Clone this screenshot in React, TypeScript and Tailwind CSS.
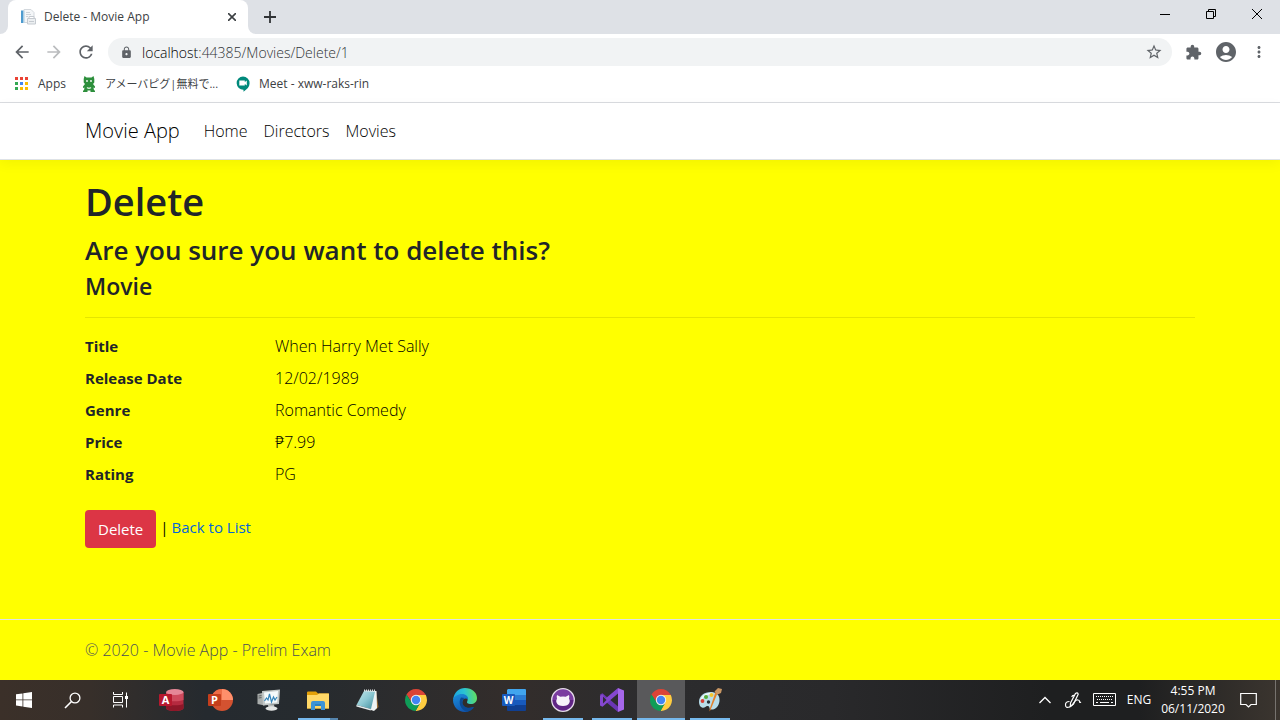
import type { ReactNode } from "react";
import {
  MdAccountCircle,
  MdArrowBack,
  MdArrowForward,
  MdExtension,
  MdLock,
  MdMoreVert,
  MdRefresh,
  MdStarBorder,
} from "react-icons/md";

const details = [
  { label: "Title", value: "When Harry Met Sally" },
  { label: "Release Date", value: "12/02/1989" },
  { label: "Genre", value: "Romantic Comedy" },
  { label: "Price", value: "₱7.99" },
  { label: "Rating", value: "PG" },
];

function PageIcon() {
  return (
    <svg width="16" height="16" viewBox="0 0 16 16" aria-hidden="true">
      <path d="M4 .5h7l3 3v10H4z" fill="#f4f6f8" stroke="#d3d8dd" />
      <path d="M1 1.500h2.500v12.500H1z" fill="#4d9bcf" />
      <path d="M4 2v12" stroke="#bcd9ea" />
      <path d="M6 3.500h4M6 5.500h5M6 7.500h2" stroke="#ccd2d8" />
      <path d="M7.500 9.500h8v5.500h-8z" fill="#eceff1" stroke="#c5cad0" />
      <path d="M9 7.500h5v2H9zM9 12.500h5" fill="#fff" stroke="#c5cad0" />
    </svg>
  );
}

function AppsIcon() {
  const dots = ["#ea4335", "#ea4335", "#ea4335", "#34a853", "#4285f4", "#fbbc04", "#34a853", "#fbbc04", "#fbbc04"];
  return (
    <svg width="14" height="14" viewBox="0 0 14 14" aria-hidden="true">
      {dots.map((color, i) => (
        <rect key={i} x={(i % 3) * 5} y={Math.floor(i / 3) * 5} width="3" height="3" fill={color} />
      ))}
    </svg>
  );
}

function PiggIcon() {
  return (
    <svg width="14" height="16" viewBox="0 0 14 16" aria-hidden="true">
      <path
        d="M2.500 0l2 1.500h5L11.500 0l.8 3v3.500l-1.300 1.500 2 2.500v1.500l-1.500-.5.3 2 1.200 1.500v1H8.500v-1.500h-3V16H1v-1l1.200-1.500.3-2-1.500.5v-1.500L3 8 1.700 6.500V3z"
        fill="#2d8f3c"
      />
      <circle cx="5" cy="5" r=".9" fill="#fff" />
      <circle cx="9" cy="5" r=".9" fill="#fff" />
      <path d="M5 11.500q2 1.500 4 0" stroke="#d9f0dc" strokeWidth="1.300" fill="none" />
    </svg>
  );
}

function MeetIcon() {
  return (
    <svg width="14" height="16" viewBox="0 0 14 16" aria-hidden="true">
      <path d="M7 .5a6.600 6.600 0 0 1 6.600 6.700c0 3.500-2.500 6-6.100 8.500v-2A6.600 6.600 0 1 1 7 .5z" fill="#00897b" />
      <path d="M3.300 4.500h5.500v1.600l2-1.500v4.800l-2-1.500v1.600H3.300z" fill="#fff" />
    </svg>
  );
}

function WindowsIcon() {
  return (
    <svg width="16" height="16" viewBox="0 0 16 16" fill="#fff" aria-hidden="true">
      <path d="M0 2.300l6.500-.9v6.100H0zM7.300 1.300L16 0v7.500H7.300zM0 8.300h6.500v6.200L0 13.600zM7.300 8.300H16V16l-8.700-1.300z" />
    </svg>
  );
}

function SearchIcon() {
  return (
    <svg width="17" height="17" viewBox="0 0 17 17" fill="none" stroke="#fff" strokeWidth="1.300" aria-hidden="true">
      <circle cx="11" cy="6" r="4.900" />
      <path d="M7.500 9.500L1 16" strokeWidth="1.600" />
    </svg>
  );
}

function TaskViewIcon() {
  return (
    <svg width="17" height="16" viewBox="0 0 17 16" fill="none" stroke="#fff" aria-hidden="true">
      <path d="M1.500 0v2.500h9V0M1.500 4.500h9v6h-9zM1.500 15.500v-2.500h9v2.500M14.500 .5v15" />
      <path d="M13 4h3v3h-3z" fill="#fff" stroke="none" />
    </svg>
  );
}

function AccessIcon() {
  return (
    <svg width="25" height="24" viewBox="0 0 25 24" aria-hidden="true">
      <path d="M7 4v16c0 1.800 4 3 8.800 3s8.700-1.200 8.700-3V4z" fill="#b52a3f" />
      <path d="M7 4v8c2 1.500 13 2 17.500 0V4z" fill="#cf4a5d" />
      <path d="M7 16c3 1.600 14 2 17.500 0v4c0 4-17.500 4-17.500 0z" fill="#8e1728" />
      <ellipse cx="15.800" cy="4" rx="8.700" ry="3" fill="#e58797" />
      <rect y="6" width="13" height="12" rx="1" fill="#b7192e" />
      <text x="6.500" y="16" textAnchor="middle" fill="#fff" fontFamily="Open Sans" fontWeight="700" fontSize="11">A</text>
    </svg>
  );
}

function PowerPointIcon() {
  return (
    <svg width="25" height="24" viewBox="0 0 25 24" aria-hidden="true">
      <circle cx="14" cy="12" r="11" fill="#d35230" />
      <path d="M14 1a11 11 0 0 1 11 11H14z" fill="#ff8f6b" />
      <path d="M14 1A11 11 0 0 0 3 12h11z" fill="#ed6c47" />
      <rect y="6" width="13" height="12" rx="1" fill="#c43e1c" />
      <text x="6.500" y="16" textAnchor="middle" fill="#fff" fontFamily="Open Sans" fontWeight="700" fontSize="11">P</text>
    </svg>
  );
}

function WordIcon() {
  return (
    <svg width="24" height="22" viewBox="0 0 24 22" aria-hidden="true">
      <path d="M6 0h17a1 1 0 0 1 1 1v5H5V1z" fill="#41a5ee" />
      <path d="M5 6h19v5H5z" fill="#2b7cd3" />
      <path d="M5 11h19v5H5z" fill="#185abd" />
      <path d="M5 16h19v5a1 1 0 0 1-1 1H6a1 1 0 0 1-1-1z" fill="#103f91" />
      <rect y="5" width="13" height="12" rx="1" fill="#185abd" />
      <text x="6.500" y="15" textAnchor="middle" fill="#fff" fontFamily="Open Sans" fontWeight="700" fontSize="10">W</text>
    </svg>
  );
}

function MonitorIcon() {
  return (
    <svg width="24" height="22" viewBox="0 0 24 22" aria-hidden="true">
      <path d="M.5 5l7-1.500v13l-7-1.500z" fill="#a9adac" />
      <path d="M1.500 7l3-.4M1.500 9l3-.4" stroke="#5e6262" />
      <path d="M5 2L23 .5 22 15 6 16.500z" fill="#c3c8c7" />
      <path d="M7 3.500l14-1.500L20.200 13.500 8 14.500z" fill="#f5fafb" />
      <path d="M7.500 12l2-3 1.500 2 1.500-6 2 8 2-5 1.500 3 2-3" fill="none" stroke="#3584ba" strokeWidth="1.200" />
      <path d="M11 16l6-.5.500 3h-6z" fill="#b6bab9" />
      <ellipse cx="14.500" cy="19.500" rx="6" ry="2.200" fill="#e3e5e4" />
    </svg>
  );
}

function ExplorerIcon() {
  return (
    <svg width="22" height="19" viewBox="0 0 22 19" aria-hidden="true">
      <path d="M0 1.500Q0 .5 1 .5h8l2 2h10a1 1 0 0 1 1 1v14H0z" fill="#e3a008" />
      <path d="M0 4h10l2-1.500h10v15H0z" fill="#ffd867" />
      <path d="M4 19v-7q0-2 2-2h10q2 0 2 2v7h-4v-4H8v4z" fill="#3d94d6" />
      <path d="M8 14h6" stroke="#1970ad" />
    </svg>
  );
}

function NotepadIcon() {
  return (
    <svg width="23" height="23" viewBox="0 0 23 23" aria-hidden="true">
      <defs>
        <linearGradient id="notepadPage" x1="0" y1="0" x2="1" y2="1">
          <stop offset="0" stopColor="#c4e6ea" />
          <stop offset="0.500" stopColor="#8cc8d2" />
          <stop offset="1" stopColor="#3f8c9c" />
        </linearGradient>
      </defs>
      <path d="M20 2l2.500 16-3 3z" fill="#9a6b32" />
      <path d="M8 1.500L20.500 2 21 19l-3 3-3-1z" fill="#eef3f3" />
      <path d="M8 2l11 .7L15 20 .5 16z" fill="url(#notepadPage)" />
      <path d="M.5 16L15 20l-.3 1.500L.3 17.500z" fill="#e5edee" />
      <path d="M8 1.500h12" stroke="#d9dddd" strokeDasharray="1 1" strokeWidth="2" />
    </svg>
  );
}

function ChromeIcon() {
  return (
    <svg width="24" height="24" viewBox="0 0 24 24" aria-hidden="true">
      <path d="M12 7h9.800l-.3-.5A11 11 0 0 0 2.470 6.500L7.670 14.500 12 12z" fill="#db4437" />
      <path d="M16.330 14.500L11.500 23H12a11 11 0 0 0 9.800-16H12z" fill="#ffcd40" />
      <path d="M7.670 14.500L2.470 6.500A11 11 0 0 0 11.500 23l4.830-8.500z" fill="#0f9d58" />
      <circle cx="12" cy="12" r="5.200" fill="#f1f1f1" />
      <circle cx="12" cy="12" r="4.200" fill="#4285f4" />
    </svg>
  );
}

function EdgeIcon() {
  return (
    <svg width="24" height="24" viewBox="0 0 24 24" aria-hidden="true">
      <defs>
        <linearGradient id="edgeTop" x1="0" y1="0.500" x2="1" y2="0.400">
          <stop offset="0" stopColor="#1ba3e0" />
          <stop offset="0.500" stopColor="#2bc3d2" />
          <stop offset="1" stopColor="#62e05c" />
        </linearGradient>
        <linearGradient id="edgeSide" x1="0" y1="0" x2="0.500" y2="1">
          <stop offset="0" stopColor="#1b8fdc" />
          <stop offset="1" stopColor="#1056b0" />
        </linearGradient>
      </defs>
      <path d="M0 12C1 4 6 0 12 0c7 0 12 4.500 12 10 0 4-3 6-6 6-3.500 0-4.500-1.500-3.800-2.600C16 10 13 7 9 7c-4.500 0-7.500 2-9 5z" fill="url(#edgeTop)" />
      <path d="M0 12c1-3.500 4.500-6 9-6 4 0 6.500 2.700 6 5.500-1.500-1.500-4.500-1.500-5.500 1.500C8 18 13 22 20.500 19 18 22.500 15 24 12 24 5 24 0 18.500 0 12z" fill="url(#edgeSide)" />
      <path d="M8 9.500C5 14 7 21.500 14 23.700c3-.4 5.500-2.200 7.300-4.700C14 21.500 8.500 18 9.500 13c.3-1.500 1-2.500 2-3z" fill="#0b4a95" />
    </svg>
  );
}

function GitHubDesktopIcon() {
  return (
    <svg width="24" height="24" viewBox="0 0 24 24" aria-hidden="true">
      <circle cx="12" cy="12" r="11.300" fill="#7b3ca0" stroke="#e5dce9" strokeWidth="1.300" />
      <path d="M1.700 12a10.300 10.300 0 0 0 20.600 0z" fill="#5f2583" />
      <path d="M6 7l3.300 1.700q2.700-.6 5.400 0L18 7q.6 1.800 0 3.500 1.300 2 .3 4.500Q17 18 12 18t-6.300-3q-1-2.500.3-4.500Q5.400 8.800 6 7z" fill="#f7f3f9" />
    </svg>
  );
}

function VisualStudioIcon() {
  return (
    <svg width="24" height="24" viewBox="0 0 24 24" aria-hidden="true">
      <path d="M0 6.500l2.500-1.200L18 18.500V24L5.500 13.500 2.700 17.500 0 16.500l3.500-4.500z" fill="#6b36b5" />
      <path d="M0 17.500l2.500 1.200L18 5.500V0L5.500 10.500 2.700 6.500 0 7.500z" fill="#8547cf" />
      <path d="M3 8.500v7L6.500 12z" fill="#302c39" />
      <path d="M18 0l6 2.500v19L18 24z" fill="#a667ea" />
    </svg>
  );
}

function PaintIcon() {
  return (
    <svg width="24" height="24" viewBox="0 0 24 24" aria-hidden="true">
      <path d="M1 14C1 8 6 4 13 4c6 0 9 3.500 8.500 9S17 22 13 21.500c-2-.3-1-3-3-3.500-2.500-.5-3 2.500-6 1.500-2-.7-3-3-3-5.500z" fill="#b8ddea" />
      <path d="M3 12c2-5 7-7 12-6.500" stroke="#eef8fb" strokeWidth="1.500" fill="none" />
      <circle cx="4.500" cy="13" r="1.900" fill="#d93f34" />
      <circle cx="8" cy="9" r="2" fill="#54ad3b" />
      <circle cx="13.500" cy="7" r="2" fill="#f3c52f" />
      <circle cx="10.500" cy="14" r="1.700" fill="#26323a" />
      <path d="M20 4l-7.500 18-1 1.500.2-2.500L17.500 4z" fill="#e3812c" />
      <path d="M16.500 3.500L20 0l4 1-1 4-3.500 1.500z" fill="#c99663" />
    </svg>
  );
}

function PenIcon() {
  return (
    <svg width="18" height="18" viewBox="0 0 18 18" fill="none" stroke="#fff" strokeWidth="1.200" aria-hidden="true">
      <path d="M6.500 12L11.500 2.500q2-1.500 2.700.7L9.500 13 6.300 15.500z" />
      <path d="M10.300 4.500q-2-.5-2.500 1.500M5.500 10.500Q1.300 10.500 1.500 14t4 2q2.500-1 4.500-4.500t4-2.500q1.500 0 1.500 1.500t1.500.5" />
    </svg>
  );
}

function KeyboardIcon() {
  return (
    <svg width="24" height="14" viewBox="0 0 24 14" fill="none" stroke="#fff" aria-hidden="true">
      <path d="M.5 .5h22v12H.5z" />
      <path d="M3 3.500h18M4 6.500h16" strokeDasharray="1 1" />
      <path d="M3 9.500h2M7 9.500h9M18 9.500h2" />
    </svg>
  );
}

function NotificationIcon() {
  return (
    <svg width="17" height="17" viewBox="0 0 17 17" fill="none" stroke="#fff" strokeWidth="1.200" aria-hidden="true">
      <path d="M.7 1.500h15.600v11h-5.300L8.500 15 6 12.500H.7z" />
    </svg>
  );
}

type TaskState = "idle" | "open" | "grouped" | "active";

const tasks: { name: string; icon: ReactNode; state: TaskState }[] = [
  { name: "Access", icon: <AccessIcon />, state: "idle" },
  { name: "PowerPoint", icon: <PowerPointIcon />, state: "idle" },
  { name: "Resource Monitor", icon: <MonitorIcon />, state: "idle" },
  { name: "File Explorer", icon: <ExplorerIcon />, state: "grouped" },
  { name: "Notepad", icon: <NotepadIcon />, state: "idle" },
  { name: "Chrome", icon: <ChromeIcon />, state: "idle" },
  { name: "Edge", icon: <EdgeIcon />, state: "idle" },
  { name: "Word", icon: <WordIcon />, state: "idle" },
  { name: "GitHub Desktop", icon: <GitHubDesktopIcon />, state: "open" },
  { name: "Visual Studio", icon: <VisualStudioIcon />, state: "open" },
  { name: "Chrome window", icon: <ChromeIcon />, state: "active" },
  { name: "Paint", icon: <PaintIcon />, state: "open" },
];

function TaskButton({ name, icon, state }: { name: string; icon: ReactNode; state: TaskState }) {
  return (
    <button
      type="button"
      aria-label={name}
      className={`relative flex h-10 w-12 shrink-0 items-center justify-center ${state === "active" ? "bg-[#59595b]" : ""}`}
    >
      {icon}
      {state === "active" && <span className="absolute inset-x-0 bottom-0 h-[2px] bg-[#76b9ed]" />}
      {state === "open" && <span className="absolute inset-x-1 bottom-0 h-[2px] bg-[#76b9ed]" />}
      {state === "grouped" && (
        <span className="absolute inset-x-1 bottom-0 flex h-[2px]">
          <span className="flex-1 bg-[#76b9ed]" />
          <span className="w-2 bg-[#5585ad]" />
        </span>
      )}
    </button>
  );
}

function BrowserChrome() {
  return (
    <header className="border-b border-[#dadce0] bg-white text-[#3c4043]">
      <div className="flex h-[34px] items-stretch bg-[#dee1e6]">
        <div className="flex w-2 items-end bg-white">
          <span className="h-full w-full rounded-br-lg bg-[#dee1e6]" />
        </div>
        <div className="flex w-60 items-center rounded-t-lg bg-white pr-2 pl-3">
          <PageIcon />
          <span className="ml-2 flex-1 text-[12px]">Delete - Movie App</span>
          <button type="button" aria-label="Close tab" className="p-1">
            <svg width="8" height="8" viewBox="0 0 8 8" stroke="#3c4043" strokeWidth="1.600" aria-hidden="true">
              <path d="M0 0l8 8M8 0L0 8" />
            </svg>
          </button>
        </div>
        <div className="flex w-2 items-end bg-white">
          <span className="h-full w-full rounded-bl-lg bg-[#dee1e6]" />
        </div>
        <button type="button" aria-label="New tab" className="w-7 pl-2">
          <svg width="12" height="12" viewBox="0 0 12 12" stroke="#303336" strokeWidth="1.800" aria-hidden="true">
            <path d="M6 0v12M0 6h12" />
          </svg>
        </button>
        <div className="ml-auto flex h-7 text-black">
          <button type="button" aria-label="Minimize" className="flex w-[46px] items-center justify-center">
            <svg width="10" height="10" stroke="currentColor" aria-hidden="true">
              <path d="M0 5.500h10" />
            </svg>
          </button>
          <button type="button" aria-label="Restore" className="flex w-[46px] items-center justify-center">
            <svg width="10" height="10" fill="none" stroke="currentColor" aria-hidden="true">
              <path d="M.5 2.500h7v7h-7zM2.500 2.500v-2h7v7h-2" />
            </svg>
          </button>
          <button type="button" aria-label="Close" className="flex w-[46px] items-center justify-center">
            <svg width="10" height="10" stroke="currentColor" aria-hidden="true">
              <path d="M0 0l10 10M10 0L0 10" />
            </svg>
          </button>
        </div>
      </div>
      <div className="flex h-9 items-center px-3 text-[#5f6368]">
        <button type="button" aria-label="Back" className="w-8">
          <MdArrowBack size={20} />
        </button>
        <button type="button" aria-label="Forward" className="w-8 text-[#babcbe]">
          <MdArrowForward size={20} />
        </button>
        <button type="button" aria-label="Reload" className="w-8">
          <MdRefresh size={20} />
        </button>
        <div className="flex h-7 flex-1 items-center rounded-full bg-[#f1f3f4] pr-[9px] pl-3">
          <MdLock size={13} />
          <label className="ml-[9px] flex flex-1 text-[14px] font-light">
            <span className="text-black">localhost</span>
            <input
              aria-label="Address"
              defaultValue=":44385/Movies/Delete/1"
              className="min-w-0 flex-1 bg-transparent text-[#303336] outline-none"
            />
          </label>
          <button type="button" aria-label="Bookmark this page">
            <MdStarBorder size={18} />
          </button>
        </div>
        <button type="button" aria-label="Extensions" className="ml-[13px]">
          <MdExtension size={17} />
        </button>
        <button type="button" aria-label="Profile" className="ml-3">
          <MdAccountCircle size={24} />
        </button>
        <button type="button" aria-label="Menu" className="ml-3">
          <MdMoreVert size={18} />
        </button>
      </div>
      <nav aria-label="Bookmarks" className="flex h-8 items-center pb-1 pl-[15px] text-[12px]">
        <a href="#apps" className="flex w-[67px] items-center gap-[9px]">
          <AppsIcon />
          Apps
        </a>
        <a href="#pigg" className="flex w-[154px] items-center gap-[9px]">
          <PiggIcon />
          <span className="text-[11px]">アメーバピグ|無料で...</span>
        </a>
        <a href="#meet" className="flex items-center gap-[9px]">
          <MeetIcon />
          Meet - xww-raks-rin
        </a>
      </nav>
    </header>
  );
}

function Taskbar() {
  return (
    <footer className="flex h-10 items-stretch bg-[linear-gradient(90deg,#3b3029_0%,#372f2a_7%,#252a2f_16%,#262b2f_24%,#332d2b_40%,#2c2c2e_50%,#29292b_65%,#1e1f20_82%,#1e1f20_89%,#3b352f_100%)] text-white">
      <div className="flex flex-1 items-stretch">
        <div className="mr-[3px] flex">
          <button type="button" aria-label="Start" className="flex w-12 items-center justify-center">
            <WindowsIcon />
          </button>
          <button type="button" aria-label="Search" className="flex w-12 items-center justify-center">
            <SearchIcon />
          </button>
          <button type="button" aria-label="Task view" className="flex w-12 items-center justify-center">
            <TaskViewIcon />
          </button>
        </div>
        <div className="flex gap-px">
          {tasks.map((task) => (
            <TaskButton key={task.name} {...task} />
          ))}
        </div>
      </div>
      <div className="flex items-center text-[12px]">
        <button type="button" aria-label="Show hidden icons" className="flex w-6 justify-center">
          <svg width="12" height="8" fill="none" stroke="#fff" strokeWidth="1.300" aria-hidden="true">
            <path d="M.5 7L6 1.500 11.500 7" />
          </svg>
        </button>
        <button type="button" aria-label="Ink workspace" className="flex w-8 justify-center">
          <PenIcon />
        </button>
        <button type="button" aria-label="Touch keyboard" className="flex w-8 justify-center">
          <KeyboardIcon />
        </button>
        <button type="button" className="w-9 text-center">ENG</button>
        <button type="button" className="w-[72px] text-center leading-[18px]">
          4:55 PM
          <br />
          06/11/2020
        </button>
        <button type="button" aria-label="Notifications" className="flex w-[38px] justify-center">
          <NotificationIcon />
        </button>
        <button type="button" aria-label="Show desktop" className="ml-2 h-full w-[5px] border-l border-[#77736f]" />
      </div>
    </footer>
  );
}

export default function App() {
  return (
    <div className="flex min-h-screen flex-col font-['Open_Sans','Noto_Sans','Noto_Sans_CJK_JP',sans-serif]">
      <BrowserChrome />
      <div className="flex flex-1 flex-col bg-[#ffff00] text-[16px] font-light text-black">
        <header className="border-b border-[#dee2e6] bg-white shadow-[0_4px_12px_rgba(0,0,0,0.05)]">
          <nav className="mx-auto flex h-14 max-w-[1140px] items-center px-[15px]">
            <a href="#home" className="mr-6 text-[20px]">Movie App</a>
            <div className="flex gap-4">
              <a href="#home">Home</a>
              <a href="#directors">Directors</a>
              <a href="#movies">Movies</a>
            </div>
          </nav>
        </header>
        <main className="mx-auto w-full max-w-[1140px] flex-1 px-[15px] pt-[17px]">
          <div className="font-semibold text-[#212529]">
            <h1 className="mb-2 text-[38px] leading-[48px]">Delete</h1>
            <h2 className="mb-1 text-[26px] leading-[34px]">Are you sure you want to delete this?</h2>
            <h3 className="text-[23px] leading-[30px]">Movie</h3>
          </div>
          <hr className="my-4 border-black/10" />
          <dl className="grid grid-cols-[190px_1fr] gap-y-2 leading-6">
            {details.map((item) => (
              <div key={item.label} className="contents">
                <dt className="text-[15px] font-bold text-[#212529]">{item.label}</dt>
                <dd>{item.value}</dd>
              </div>
            ))}
          </dl>
          <form className="mt-6 flex items-center gap-1 text-[15px] font-normal" onSubmit={(event) => event.preventDefault()}>
            <button type="submit" className="h-[38px] rounded bg-[#dc3545] px-[13px] text-white">
              Delete
            </button>
            <p className="flex gap-[3px] pb-1">
              <span>|</span>
              <a href="#movies" className="text-[#0366d6]">Back to List</a>
            </p>
          </form>
        </main>
        <footer className="border-t border-[#dee2e6] leading-[60px] text-[#495057]">
          <div className="mx-auto max-w-[1140px] px-[15px]">© 2020 - Movie App - Prelim Exam</div>
        </footer>
      </div>
      <Taskbar />
    </div>
  );
}
